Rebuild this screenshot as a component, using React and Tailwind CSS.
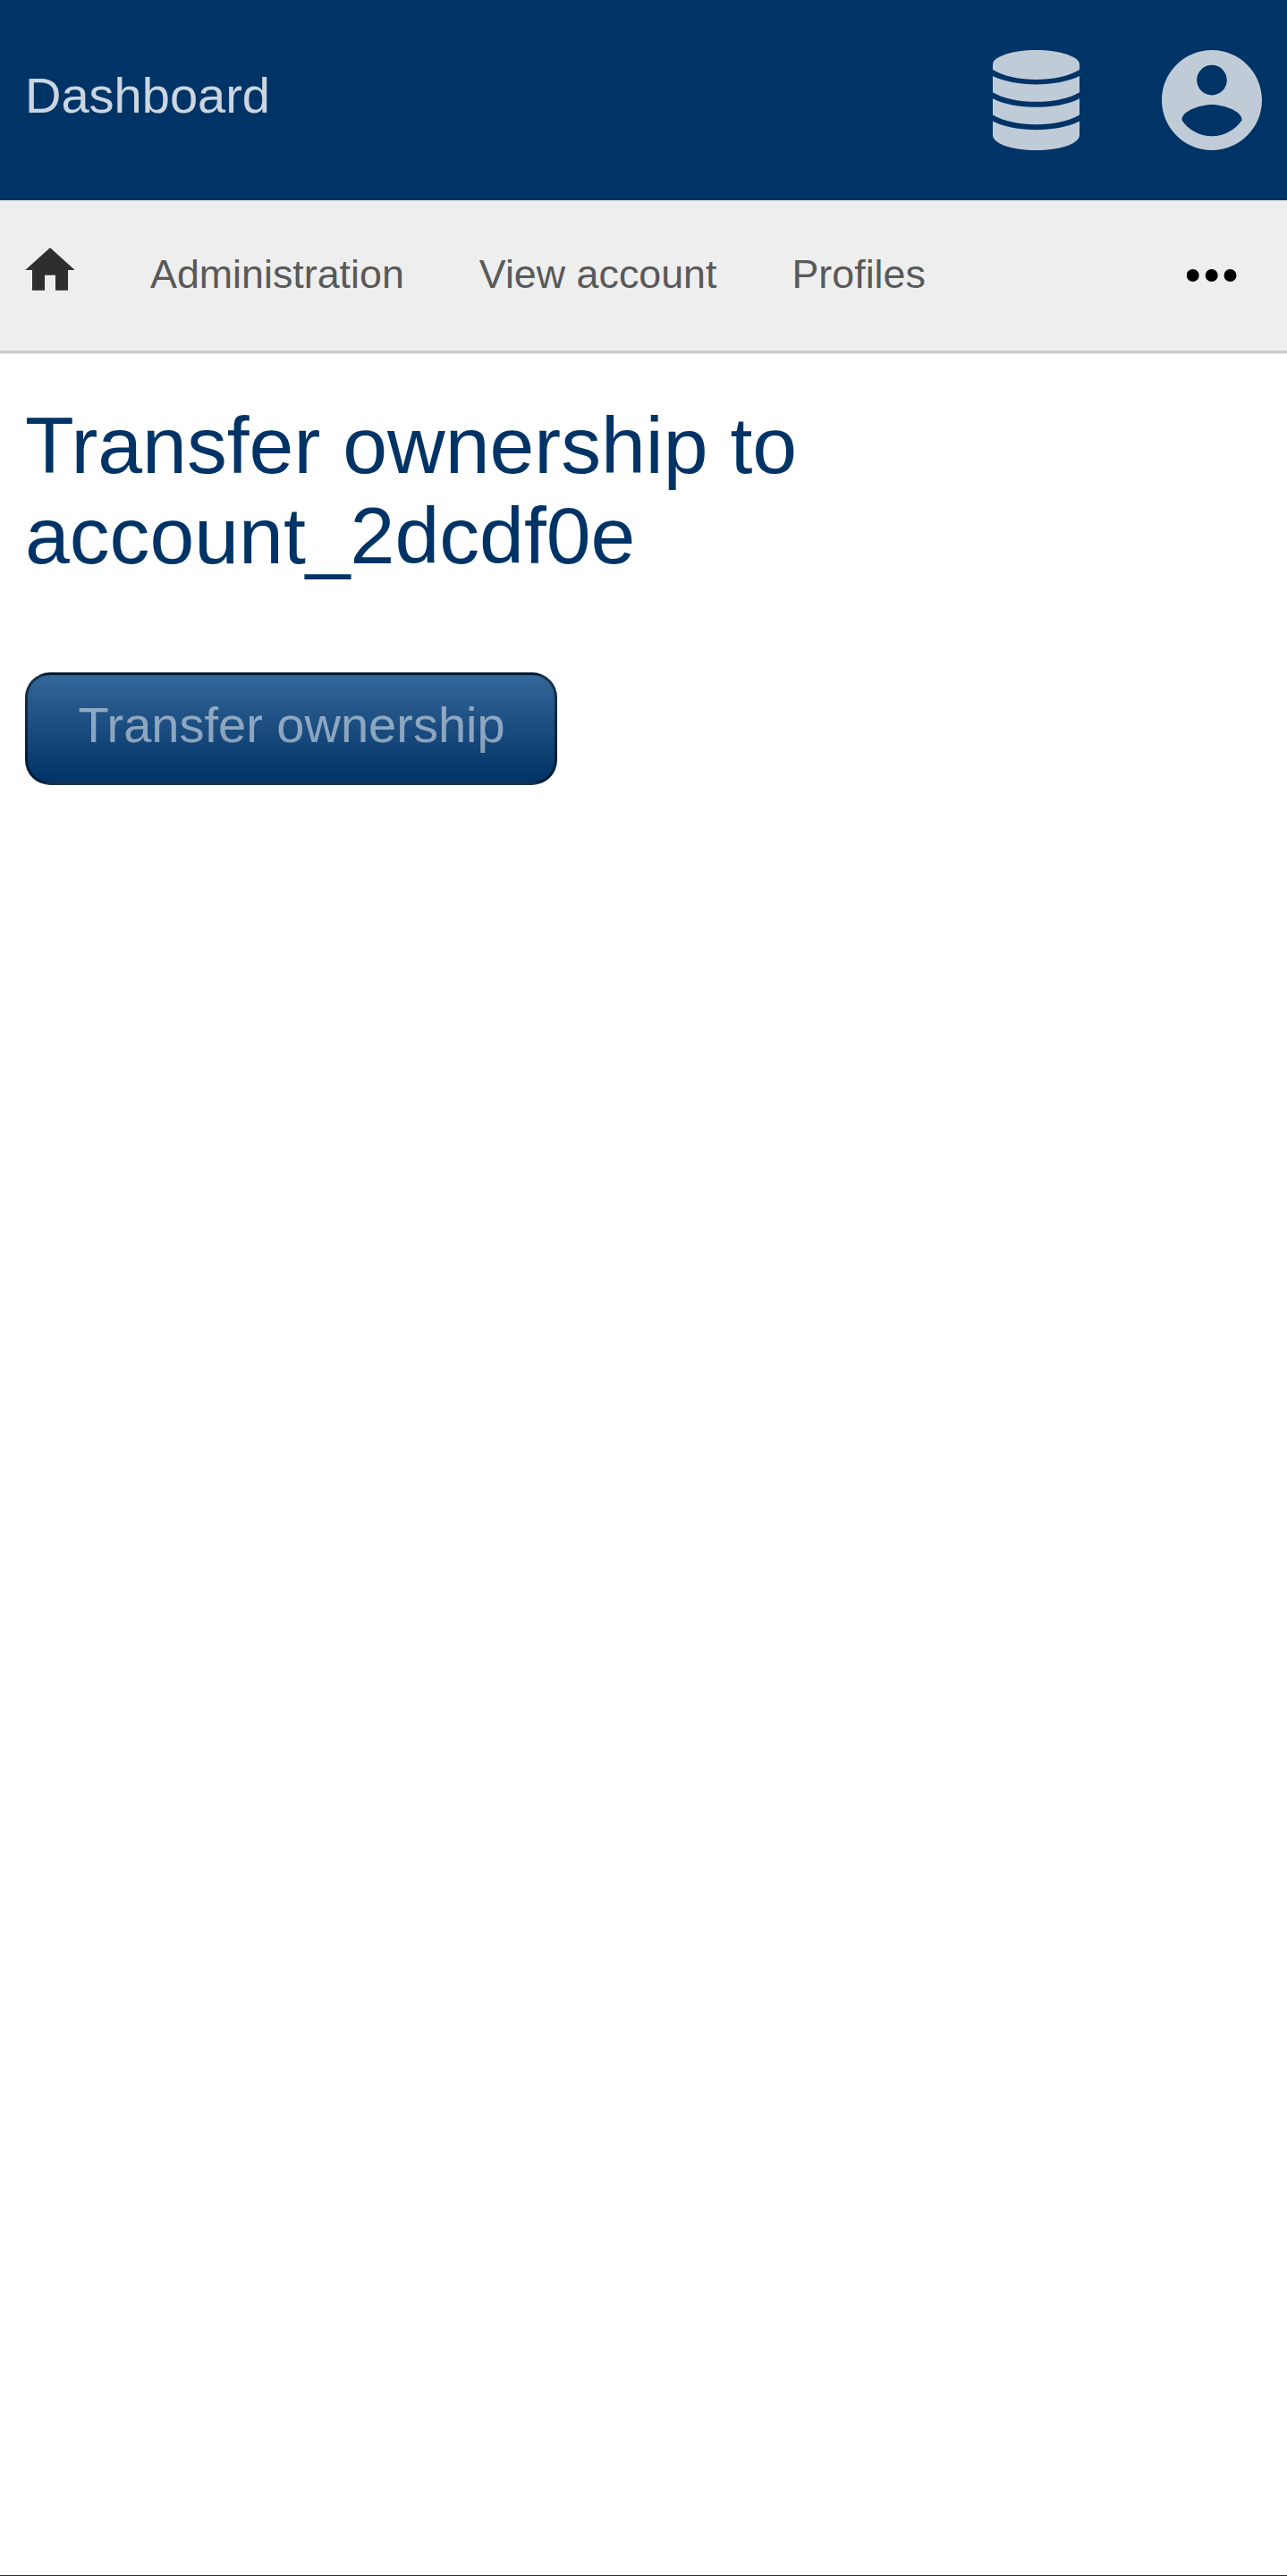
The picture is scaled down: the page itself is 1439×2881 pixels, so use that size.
const DatabaseIcon = () => (
  <svg className="h-[112px] w-[97px]" viewBox="90 78 291 335" preserveAspectRatio="none" fill="currentColor">
    <path d="M90 126C90 100 155 78 235.500 78S381 100 381 126V144C345 166 290 177 235.500 177S126 166 90 144Z" />
    <path d="M90 165C126 183 180 193 235.500 193S345 183 381 165V219C345 241 290 251 235.500 251S126 241 90 219Z" />
    <path d="M90 240C126 259 180 269 235.500 269S345 259 381 240V295C345 317 290 327 235.500 327S126 317 90 295Z" />
    <path d="M90 316C126 335 180 345 235.500 345S345 335 381 316V362C381 391 316 413 235.500 413S90 391 90 362Z" />
  </svg>
);

const AccountIcon = () => (
  <svg className="h-[112px] w-[112px]" viewBox="2 2 20 20" fill="currentColor">
    <path d="M12 2C6.48 2 2 6.48 2 12s4.48 10 10 10 10-4.48 10-10S17.52 2 12 2zm0 3c1.66 0 3 1.34 3 3s-1.34 3-3 3-3-1.34-3-3 1.34-3 3-3zm0 14.200c-2.500 0-4.710-1.280-6-3.220.030-1.990 4-3.080 6-3.080 1.990 0 5.970 1.090 6 3.080-1.290 1.940-3.500 3.220-6 3.220z" />
  </svg>
);

const HomeIcon = () => (
  <svg className="h-[48px] w-[56px]" viewBox="0 0 168 144" fill="currentColor">
    <path d="M84 0L167 75H144V143H102V92H66V143H24V75H1Z" />
  </svg>
);

const MoreIcon = () => (
  <svg className="h-[14px] w-[56px]" viewBox="0 0 56 14" fill="currentColor">
    <circle cx="6.700" cy="7" r="7" />
    <circle cx="27.700" cy="7" r="7" />
    <circle cx="48.500" cy="7" r="7" />
  </svg>
);

export default function App() {
  return (
    <div className="flex h-[2881px] w-[1439px] flex-col overflow-hidden border-b border-[#003366] bg-white font-['Liberation_Sans',Arial,sans-serif]">
      <header className="flex h-[224px] shrink-0 justify-between bg-[#003366] px-[28px] pt-[56px]">
        <a className="pt-[19px] text-[56px] leading-[63px] text-white/80">Dashboard</a>
        <div className="flex gap-[92px] text-[#bfccd8]">
          <DatabaseIcon />
          <AccountIcon />
        </div>
      </header>
      <nav className="flex h-[171px] shrink-0 border-b-[3px] border-[#cccccc] bg-[#eeeeee] pr-[56px] pl-[28px] text-[44.800px] leading-[52px] text-[#595959]">
        <a className="mr-[84px] pt-[53px] text-[#2e2e2e]"><HomeIcon /></a>
        <a className="mr-[84px] pt-[56px]">Administration</a>
        <a className="mr-[84px] pt-[56px]">View account</a>
        <a className="pt-[56px]">Profiles</a>
        <button className="ml-auto self-start pt-[77px] text-black"><MoreIcon /></button>
      </nav>
      <main className="flex flex-col items-start border-t border-[#e5e5e5] px-[28px] pt-[52px]">
        <h1 className="w-[1000px] text-[89.600px] leading-[101px] text-[#003366]">
          Transfer ownership to account_2dcdf0e
        </h1>
        <button className="mt-[102px] h-[126px] w-[595px] rounded-[28px] border-[3px] border-black/50 bg-linear-to-b from-[#336699] to-[#003366] pb-[9px] pl-px text-[56px] leading-[63px] whitespace-nowrap text-white/50">
          Transfer ownership
        </button>
      </main>
    </div>
  );
}
